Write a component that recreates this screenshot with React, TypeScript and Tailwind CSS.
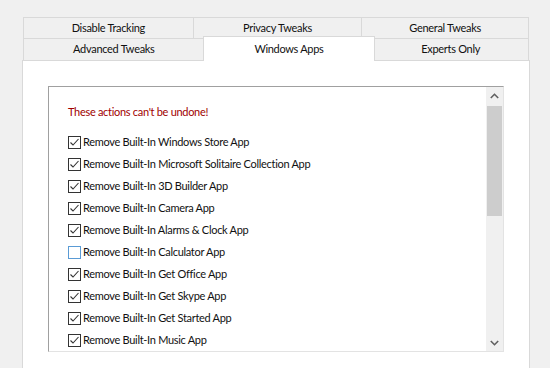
import React from "react";

const items: { label: string; checked: boolean; focus?: boolean }[] = [
  { label: "Remove Built-In Windows Store App", checked: true },
  { label: "Remove Built-In Microsoft Solitaire Collection App", checked: true },
  { label: "Remove Built-In 3D Builder App", checked: true },
  { label: "Remove Built-In Camera App", checked: true },
  { label: "Remove Built-In Alarms & Clock App", checked: true },
  { label: "Remove Built-In Calculator App", checked: false, focus: true },
  { label: "Remove Built-In Get Office App", checked: true },
  { label: "Remove Built-In Get Skype App", checked: true },
  { label: "Remove Built-In Get Started App", checked: true },
  { label: "Remove Built-In Music App", checked: true },
];

function Check({ checked, focus }: { checked: boolean; focus?: boolean }) {
  return (
    <div
      className={
        "w-[13px] h-[13px] bg-white border shrink-0 flex items-center justify-center " +
        (focus ? "border-[#5a9bd5]" : "border-[#333333]")
      }
    >
      {checked && (
        <svg width="11" height="11" viewBox="0 0 11 11">
          <path d="M1.5 5.5 L4 8 L9.5 2" fill="none" stroke="#333" strokeWidth="1.1" />
        </svg>
      )}
    </div>
  );
}

function Tab({ label, w }: { label: string; w: string }) {
  return (
    <div
      className={
        "flex items-center justify-center border border-[#d9d9d9] bg-[#f0f0f0] -ml-[1px] first:ml-0 text-[11px] text-[#111] " +
        w
      }
    >
      {label}
    </div>
  );
}

export default function App() {
  return (
    <div
      className="w-[550px] h-[368px] bg-[#f0f0f0] overflow-hidden pt-[17px] tracking-[-0.3px]"
      style={{ fontFamily: 'Lato, "Liberation Sans", sans-serif' }}
    >
      <div className="ml-[23px] w-[506px]">
        <div className="flex h-[22px]">
          <Tab label="Disable Tracking" w="w-[171px]" />
          <Tab label="Privacy Tweaks" w="w-[170px]" />
          <Tab label="General Tweaks" w="w-[168px]" />
        </div>
        <div className="flex h-[23px] -mt-[1px]">
          <Tab label="Advanced Tweaks" w="w-[182px]" />
          <div className="flex items-start justify-center pt-[4px] w-[173px] h-[25px] -mx-[2px] -mt-[2px] bg-white border border-b-0 border-[#d9d9d9] relative z-10 text-[11px] text-[#111]">
            Windows Apps
          </div>
          <Tab label="Experts Only" w="w-[157px]" />
        </div>
      </div>
      <div className="ml-[22px] w-[508px] h-[400px] bg-white border border-[#d9d9d9] -mt-[1px] pt-[25px] pl-[25px]">
        <div className="w-[456px] h-[266px] border-t border-l border-[#a0a0a0] border-b border-r border-b-[#e3e3e3] border-r-[#e3e3e3] flex overflow-hidden">
          <div className="flex-1 pl-[19px] pt-[14px]">
            <div className="h-[22px] flex items-center text-[11px] text-[#a00000] mb-[8px]">
              These actions can't be undone!
            </div>
            {items.map((it) => (
              <div key={it.label} className="h-[22px] flex items-center gap-[2px] text-[11px] text-[#111]">
                <Check checked={it.checked} focus={it.focus} />
                <span>{it.label}</span>
              </div>
            ))}
          </div>
          <div className="w-[17px] bg-[#f0f0f0] flex flex-col">
            <div className="h-[17px] flex items-center justify-center">
              <svg width="9" height="6" viewBox="0 0 9 6">
                <path d="M0.8 5 L4.5 1.3 L8.2 5" fill="none" stroke="#606060" strokeWidth="1.6" />
              </svg>
            </div>
            <div className="mx-[1px] mt-[2px] h-[110px] bg-[#cdcdcd]" />
            <div className="flex-1" />
            <div className="h-[17px] flex items-center justify-center">
              <svg width="9" height="6" viewBox="0 0 9 6">
                <path d="M0.8 1 L4.5 4.7 L8.2 1" fill="none" stroke="#606060" strokeWidth="1.6" />
              </svg>
            </div>
          </div>
        </div>
      </div>
    </div>
  );
}
